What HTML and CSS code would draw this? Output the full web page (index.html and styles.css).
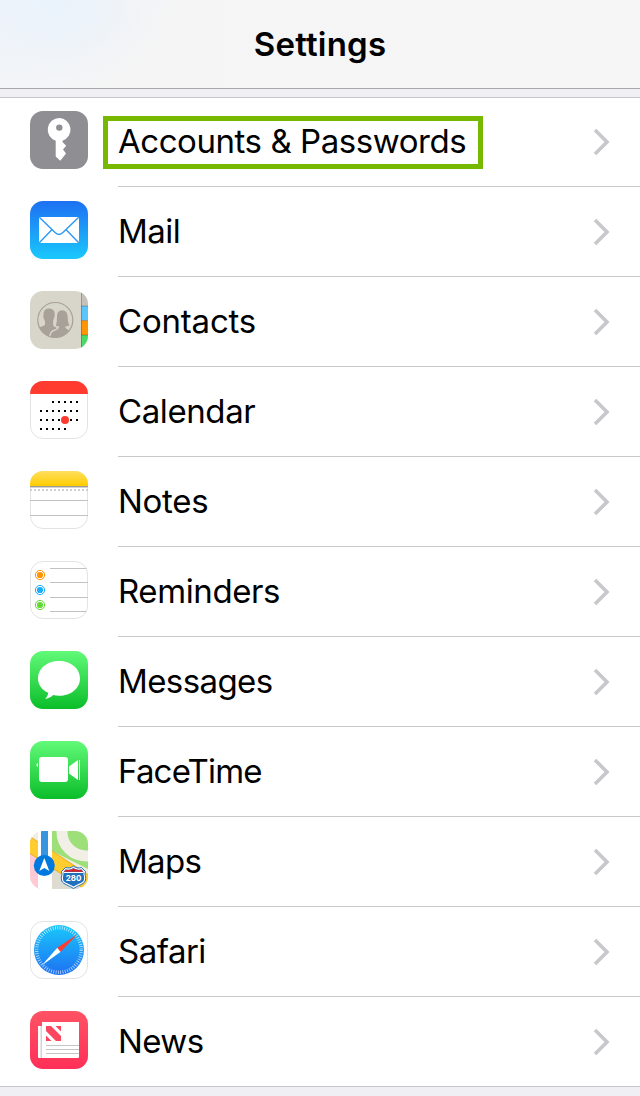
FILE: index.html
```html
<!DOCTYPE html>
<html lang="en">
<head>
<meta charset="utf-8">
<title>Settings</title>
<link rel="stylesheet" href="styles.css">
</head>
<body>
<header class="navbar"><h1 class="title">Settings</h1></header>
<main class="list">
  <div class="row">
    <svg class="icon" viewBox="0 0 58 58"><rect width="58" height="58" rx="13" fill="#8e8e93"/><path fill="#fff" fill-rule="evenodd" d="M29.3 7a11.7 11.7 0 0 1 3.2 22.8V31l3.7 3.8-3.2 3.7 3 4-5.7 7.2-4.6-4.2V29.8A11.7 11.7 0 0 1 29.3 7ZM29.3 13.4a3.2 3.2 0 1 0 0 6.4 3.2 3.2 0 0 0 0-6.4Z"/></svg>
    <div class="cell"><span class="label accounts highlight">Accounts &amp; Passwords</span><svg class="chevron" viewBox="0 0 18 28"><path d="M3 2l12 12L3 26"/></svg></div>
  </div>
  <div class="row">
    <svg class="icon" viewBox="0 0 58 58"><defs><linearGradient id="mail" x2="0" y2="1"><stop stop-color="#1d70f2"/><stop offset="1" stop-color="#1ac8fd"/></linearGradient></defs><rect width="58" height="58" rx="13" fill="url(#mail)"/><rect x="9" y="16" width="40" height="26" rx="1" fill="#fff"/><path d="M9.3 16.3 24.8 31.3Q29 35.6 33.2 31.3L48.7 16.3M9.3 41.7 21.8 28.7M48.7 41.7 36.2 28.7" fill="none" stroke="#2c98f5" stroke-width="1.4"/></svg>
    <div class="cell"><span class="label mail">Mail</span><svg class="chevron" viewBox="0 0 18 28"><path d="M3 2l12 12L3 26"/></svg></div>
  </div>
  <div class="row">
    <svg class="icon" viewBox="0 0 58 58"><defs><clipPath id="tile"><rect width="58" height="58" rx="13"/></clipPath><clipPath id="medal"><circle cx="25.3" cy="29" r="17.5"/></clipPath></defs><g clip-path="url(#tile)"><path fill="#d8d5cb" d="M0 0h51v58H0z"/><path fill="#c5c1b9" d="M51 0h7v15h-7z"/><path fill="#5ac4fc" d="M51 15h7v14.5h-7z"/><path fill="#ff9500" d="M51 29.5h7V44h-7z"/><path fill="#4cd964" d="M51 44h7v14h-7z"/><path d="M51.5 0v58M51 15h7M51 29.5h7M51 44h7" stroke="#000" stroke-opacity=".22"/></g><g clip-path="url(#medal)" fill="#a8a199"><path d="M19 17.500c4 0 6 2.500 5.700 6.500 0 2-.6 3-1.200 4.500-.5 2-.5 4-.3 5.500.5 1.500 2 2 4 3L22 50H5V38.500c3.500-2.500 8.500-3 9.800-4.500.5-1.500.3-3.500-.3-5-1-1.500-1.200-3-1-5.500C13.500 19.500 15.500 17.500 19 17.500Z"/><path d="M32 18.500c4.500 0 6.300 3.500 6.300 7.500 0 4 .2 6 2 8.500-1.300 1.200-3 1.500-4.500 1.700.5 1.800 3.500 2.300 7.200 4.300v10H19.500c0-8 1.500-10.500 5.500-11.500 2-.6 3.200-1.100 3.500-2.800-1.500-.2-2.800-.7-3.500-1.500 1.300-2.500 1.300-4.700 1.300-8.700 0-4.500 1.700-7.500 5.700-7.500Z" stroke="#d8d5cb" stroke-width="1.300"/></g><circle cx="25.300" cy="29" r="17.500" fill="none" stroke="#a8a199" stroke-width="1.200"/></svg>
    <div class="cell"><span class="label contacts">Contacts</span><svg class="chevron" viewBox="0 0 18 28"><path d="M3 2l12 12L3 26"/></svg></div>
  </div>
  <div class="row">
    <svg class="icon" viewBox="0 0 58 58"><rect x=".5" y=".5" width="57" height="57" rx="12.500" fill="#fff" stroke="#e3e3e3"/><path d="M0 13A13 13 0 0 1 13 0H45A13 13 0 0 1 58 13Z" fill="#ff3b30"/><path d="M22 21h26M10 30h38M10 39h38M10 48h26" stroke="#000" stroke-width="2" stroke-dasharray="2 4"/><circle cx="35" cy="39" r="4" fill="#ff3b30"/></svg>
    <div class="cell"><span class="label calendar">Calendar</span><svg class="chevron" viewBox="0 0 18 28"><path d="M3 2l12 12L3 26"/></svg></div>
  </div>
  <div class="row">
    <svg class="icon" viewBox="0 0 58 58"><defs><linearGradient id="notes" x2="0" y2="1"><stop stop-color="#ffdf60"/><stop offset="1" stop-color="#fc0"/></linearGradient></defs><rect x=".5" y=".5" width="57" height="57" rx="12.500" fill="#fff" stroke="#e3e3e3"/><path d="M0 15v-2A13 13 0 0 1 13 0H45A13 13 0 0 1 58 13v2Z" fill="url(#notes)"/><path d="M0 15.500h58" stroke="#9c9c94"/><path d="M0 16.500h58" stroke="#d2d2d2"/><path d="M0 19h58" stroke="#cfcfcf" stroke-width="2" stroke-dasharray="2 2"/><path d="M0 29.500h58M0 44.500h58" stroke="#c2c2c4"/></svg>
    <div class="cell"><span class="label notes">Notes</span><svg class="chevron" viewBox="0 0 18 28"><path d="M3 2l12 12L3 26"/></svg></div>
  </div>
  <div class="row">
    <svg class="icon" viewBox="0 0 58 58"><rect x=".5" y=".5" width="57" height="57" rx="12.500" fill="#fff" stroke="#e3e3e3"/><path d="M20 7.500h36.500M20 21.500h38M20 36.500h38M20 50.500h36.500" stroke="#c2c2c4"/><g fill="none" stroke="#ff9500"><circle cx="10" cy="14" r="4.600"/><circle cx="10" cy="14" r="3.100" fill="#ff9500" stroke="none"/></g><g fill="none" stroke="#1badf8"><circle cx="10" cy="29" r="4.600"/><circle cx="10" cy="29" r="3.100" fill="#1badf8" stroke="none"/></g><g fill="none" stroke="#63da38"><circle cx="10" cy="44" r="4.600"/><circle cx="10" cy="44" r="3.100" fill="#63da38" stroke="none"/></g></svg>
    <div class="cell"><span class="label reminders">Reminders</span><svg class="chevron" viewBox="0 0 18 28"><path d="M3 2l12 12L3 26"/></svg></div>
  </div>
  <div class="row">
    <svg class="icon" viewBox="0 0 58 58"><defs><linearGradient id="green" x2="0" y2="1"><stop stop-color="#61fa78"/><stop offset="1" stop-color="#0bbd29"/></linearGradient></defs><rect width="58" height="58" rx="13" fill="url(#green)"/><path fill="#fff" d="M29 10c12 0 21 7.600 21 17.400S41 44.700 29 44.700c-2 0-4-.2-5.800-.7-2.200 2-4.800 3.600-8.200 3.800 2-1.700 3-3.700 3.200-6C12 38.800 8 33.600 8 27.400 8 17.600 17 10 29 10Z"/></svg>
    <div class="cell"><span class="label messages">Messages</span><svg class="chevron" viewBox="0 0 18 28"><path d="M3 2l12 12L3 26"/></svg></div>
  </div>
  <div class="row">
    <svg class="icon" viewBox="0 0 58 58"><rect width="58" height="58" rx="13" fill="url(#green)"/><g fill="#fff"><rect x="9" y="16" width="29" height="25" rx="3"/><path d="M39 25.500 48 19v20l-9-6.500ZM49 19h1v20h-1zM8 22v4c-2-.3-2-3.700 0-4Z"/></g></svg>
    <div class="cell"><span class="label facetime">FaceTime</span><svg class="chevron" viewBox="0 0 18 28"><path d="M3 2l12 12L3 26"/></svg></div>
  </div>
  <div class="row">
    <svg class="icon" viewBox="0 0 58 58"><g clip-path="url(#tile)"><path fill="#f0ede5" d="M0 0h58v58H0z"/><path fill="#9ddf78" d="M22 0h36v38L22 20Z"/><circle cx="56" cy="1" r="24" fill="none" stroke="#f2efe7" stroke-width="11"/><path fill="#ffcad4" d="M0 22 10 29v29H0z"/><path fill="#dedbd1" d="M22 37 52 58H22z"/><path d="M-3 12 61 54" stroke="#eab52c" stroke-width="15"/><path d="M-3 12 61 54" stroke="#ffcd30" stroke-width="13"/><path fill="#fff" d="M8 0h14v58H8z"/><path fill="#3795e0" d="M11 0h7v30h-7z"/></g><circle cx="14.300" cy="34.500" r="10.500" fill="#0079de"/><path fill="#fff" d="m14.300 27 5 13-5-3-5 3Z"/><path d="M35.500 37.500c3 1 5.500.6 8-1.300 2.500 1.900 5 2.300 8 1.300l3 3.500c-1.200 3 1.500 5 0 8.500-1.500 3.500-7 4-11 7-4-3-9.500-3.500-11-7-1.500-3.500 1.200-5.500 0-8.500Z" fill="#2170bd" stroke="#fff" stroke-width="1.500"/><path fill="#d9242b" d="M35.600 38.500c3 .8 5.500.4 7.900-1.200 2.400 1.600 4.900 2 7.900 1.200l1.800 2.300H33.800Z"/><path stroke="#fff" stroke-width="1" d="M33.500 41.500h20"/><path d="M35.600 36.500c3 1 5.400.5 7.900-1.300 2.500 1.800 4.900 2.300 7.900 1.300l4.100 4c-1.700 3.500 1.400 5.500-.3 9.500-1.500 3.500-7.700 4.500-11.700 7.600-4-3.100-10.200-4.100-11.700-7.600-1.700-4 1.400-6-.3-9.500Z" fill="none" stroke="#2170bd"/><text class="shield" x="43.500" y="49.500" text-anchor="middle">280</text></svg>
    <div class="cell"><span class="label maps">Maps</span><svg class="chevron" viewBox="0 0 18 28"><path d="M3 2l12 12L3 26"/></svg></div>
  </div>
  <div class="row">
    <svg class="icon" viewBox="0 0 58 58"><defs><linearGradient id="safari" x2="0" y2="1"><stop stop-color="#19c8fb"/><stop offset="1" stop-color="#1e70f2"/></linearGradient></defs><rect x=".5" y=".5" width="57" height="57" rx="12.500" fill="#fff" stroke="#e3e3e3"/><circle cx="29" cy="29" r="25" fill="url(#safari)"/><circle cx="29" cy="29" r="22.300" fill="none" stroke="#fff" stroke-opacity=".7" stroke-width="3.400" stroke-dasharray=".8 1.535"/><path d="m11.700 44.400 15.600-17.700 3.400 4Z" fill="#fff"/><path d="M47.500 13.200 27.300 26.700l3.400 4Z" fill="#ff3b30"/></svg>
    <div class="cell"><span class="label safari">Safari</span><svg class="chevron" viewBox="0 0 18 28"><path d="M3 2l12 12L3 26"/></svg></div>
  </div>
  <div class="row">
    <svg class="icon" viewBox="0 0 58 58"><defs><linearGradient id="news" x2="0" y2="1"><stop stop-color="#ff5364"/><stop offset="1" stop-color="#ff3058"/></linearGradient></defs><rect width="58" height="58" rx="13" fill="url(#news)"/><path fill="#fff" d="M8 15h4v32H9q-1 0-1-1z"/><path fill="#d4d4d4" d="M10.500 15H12v32h-1.500z"/><path fill="#fff" d="M12 11h37v35q0 1-1 1H12z"/><path fill="#fc4660" d="M16 15h5l10 10v5h-5L16 20zM25.500 15H31v5.500zM16 24.500V30h5.500z"/><path stroke="#c5c5c5" d="M16 34.500h33M16 38.500h33M16 42.500h33"/></svg>
    <div class="cell"><span class="label news">News</span><svg class="chevron" viewBox="0 0 18 28"><path d="M3 2l12 12L3 26"/></svg></div>
  </div>
</main>
</body>
</html>
```
FILE: styles.css
```css
* { box-sizing: border-box; }
body {
  margin: 0;
  height: 1096px;
  overflow: hidden;
  background: #efeff4;
  color: #000;
  font-family: Inter, "Liberation Sans", sans-serif;
}
.navbar {
  display: flex;
  justify-content: center;
  height: 89px;
  padding-top: 24px;
  border-bottom: 1px solid #a7a7aa;
  background: radial-gradient(ellipse 120px 90px at 55px 0, #e9f2fc, rgba(233, 242, 252, 0)), linear-gradient(90deg, #f3f5f8, #f5f5f5 20%, #f6f6f7);
}
.title {
  margin: 0;
  font-size: 33px;
  font-weight: 600;
  line-height: 40px;
  letter-spacing: 0.2px;
}
.list {
  margin-top: 8px;
  border-bottom: 1px solid #c8c7cc;
  background: linear-gradient(#c8c7cc 1px, #fff 1px);
}
.row {
  display: flex;
  gap: 30px;
  height: 90px;
  padding-left: 30px;
}
.row:last-child { height: 89px; }
.icon {
  flex: none;
  width: 58px;
  height: 58px;
  margin-top: 14px;
}
.cell {
  display: flex;
  flex: 1;
  align-items: flex-start;
  justify-content: space-between;
  padding: 19px 30px 0 0;
  border-bottom: 1px solid #c8c7cc;
}
.row:last-child .cell { border-bottom: 0; }
.label {
  padding-top: 4px;
  font-size: 33px;
  line-height: 42px;
  white-space: nowrap;
}
.highlight {
  width: 380px;
  height: 53px;
  margin-left: -15px;
  padding: 0 0 0 10px;
  border: 5px solid #76b900;
  line-height: 40px;
}
.accounts { letter-spacing: -0.45px; }
.mail { letter-spacing: -0.55px; }
.contacts { letter-spacing: -0.2px; }
.calendar { letter-spacing: -0.4px; }
.notes { letter-spacing: -0.3px; }
.reminders { letter-spacing: -0.4px; }
.messages { letter-spacing: -0.6px; }
.facetime { letter-spacing: -0.8px; }
.maps { letter-spacing: -0.7px; }
.safari { letter-spacing: -0.5px; }
.news { letter-spacing: -0.6px; }
.chevron {
  width: 18px;
  height: 28px;
  margin-top: 12px;
  fill: none;
  stroke: #c7c7cc;
  stroke-width: 3.6;
}
.shield {
  fill: #fff;
  font: 700 8px Inter, sans-serif;
}
```
